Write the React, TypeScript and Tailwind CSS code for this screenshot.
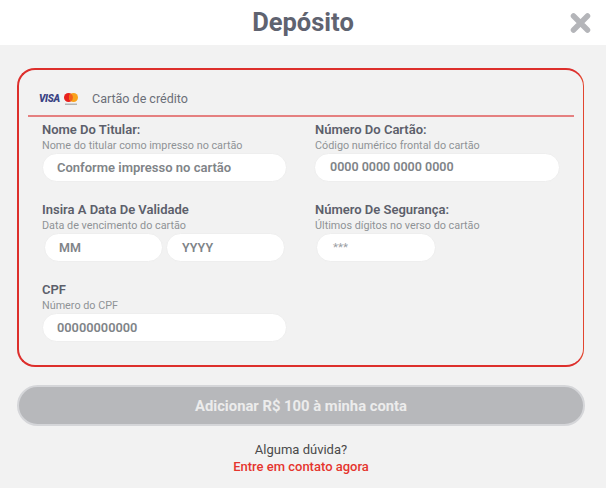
const font = { fontFamily: "Roboto, 'Noto Sans', sans-serif" };

function Field({
  label,
  hint,
  children,
}: {
  label: string;
  hint: string;
  children: React.ReactNode;
}) {
  return (
    <div className="h-[80px]">
      <p className="text-[13px] leading-[16px] font-semibold text-[#5c5f6b]">{label}</p>
      <p className="text-[10.8px] leading-[14px] mt-px text-[#8f9396]">{hint}</p>
      {children}
    </div>
  );
}

function Input({ text, className }: { text: string; className: string }) {
  return (
    <div
      className={`h-[29px] flex items-center bg-white rounded-full border border-[#eeeeee] ${className}`}
    >
      {text}
    </div>
  );
}

function CardLogos() {
  return (
    <div className="flex items-center gap-[3px] w-[53px]">
      <span className="text-[10px] leading-none font-black italic text-[#3a4384] tracking-[-0.3px]">VISA</span>
      <svg width="16" height="14" viewBox="0 0 16 14">
        <circle cx="5.5" cy="5.5" r="4.5" fill="#e8211d" />
        <circle cx="10.5" cy="5.5" r="4.5" fill="#f9a31c" />
        <path d="M8 1.8a4.5 4.5 0 0 1 0 7.4a4.5 4.5 0 0 1 0-7.4z" fill="#f2601c" />
        <rect x="2" y="11.5" width="12" height="1.5" fill="#b5b5b5" />
      </svg>
    </div>
  );
}

const value = "text-[12.5px] font-semibold text-[#7f8488]";

export default function App() {
  return (
    <div className="w-[606px] h-[488px] bg-[#f2f2f2] overflow-hidden" style={font}>
      <header className="relative h-[45px] bg-white flex items-center justify-center">
        <h1 className="text-[25.5px] font-bold text-[#5f6370]">Depósito</h1>
        <svg className="absolute left-[570px] top-[13px]" width="21" height="20" viewBox="0 0 21 20">
          <path d="M3.5 3l14 14M17.5 3l-14 14" stroke="#b4b5b9" strokeWidth="5.5" strokeLinecap="round" />
        </svg>
      </header>

      <div className="pl-[17px] pt-[23px] w-[585px]">
        <section className="w-[567px] h-[299px] rounded-[18px] border-2 border-[#dd2f2c] border-r-[1.5px] border-r-[#e2452f]">
          <div className="mx-[9px] h-[47px] border-b-2 border-[#e58080] flex items-center pl-[11px] pt-[12px]">
            <CardLogos />
            <span className="text-[12.5px] text-[#6b6f78] pt-[2px]">Cartão de crédito</span>
          </div>

          <div className="grid grid-cols-[273px_1fr] pl-[23px] pt-[5px]">
            <Field label="Nome Do Titular:" hint="Nome do titular como impresso no cartão">
              <Input text="Conforme impresso no cartão" className={`w-[245px] pl-[14px] text-[13px] font-semibold text-[#7f8488]`} />
            </Field>
            <Field label="Número Do Cartão:" hint="Código numérico frontal do cartão">
              <Input text="0000 0000 0000 0000" className={`w-[246px] -ml-px pl-[15px] ${value}`} />
            </Field>
            <Field label="Insira A Data De Validade" hint="Data de vencimento do cartão">
              <div className="flex gap-[3px] pl-[2px]">
                <Input text="MM" className={`w-[119px] pl-[14px] pt-[2px] ${value}`} />
                <Input text="YYYY" className={`w-[119px] pl-[15px] pt-[2px] ${value}`} />
              </div>
            </Field>
            <Field label="Número De Segurança:" hint="Últimos dígitos no verso do cartão">
              <div className="pl-px">
                <Input text="***" className="w-[120px] pl-[16px] text-[11.5px] font-normal text-[#9a9ea3]" />
              </div>
            </Field>
            <Field label="CPF" hint="Número do CPF">
              <Input text="00000000000" className={`w-[245px] pl-[14px] ${value} text-[12.8px]`} />
            </Field>
          </div>
        </section>

        <button className="mt-[18px] w-[568px] h-[41px] rounded-full bg-[#b7b8bb] border-2 border-[#d5d6d9] pt-px text-[14.8px] font-bold text-[#ececec]">
          Adicionar R$ 100 à minha conta
        </button>

        <div className="mt-[15px] text-center text-[13px] leading-[17px]">
          <p className="text-[#4a4a4a]">Alguma dúvida?</p>
          <p className="text-[#e5352e] font-medium">Entre em contato agora</p>
        </div>
      </div>
    </div>
  );
}
